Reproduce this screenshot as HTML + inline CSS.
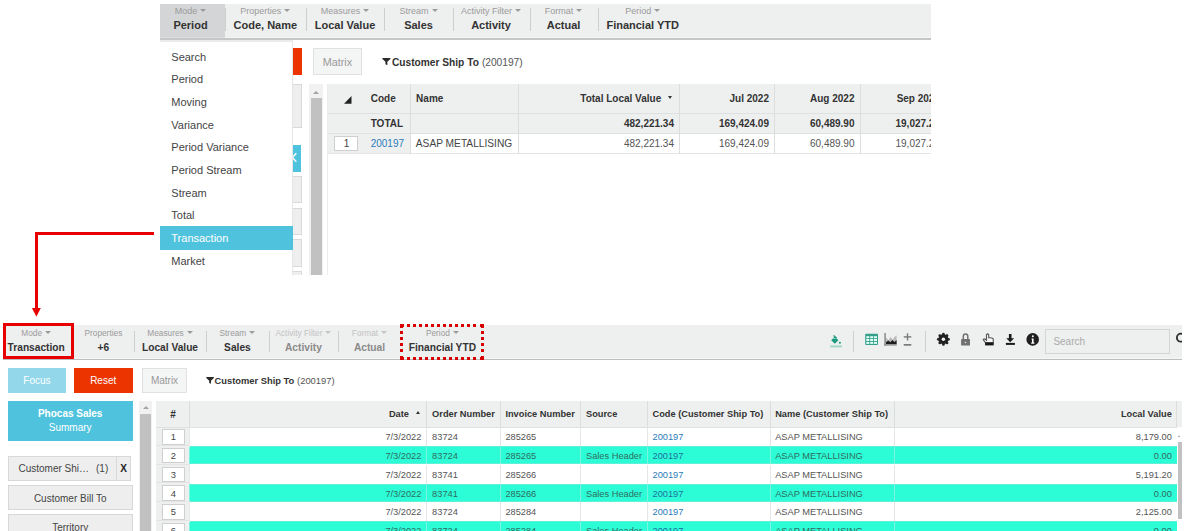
<!DOCTYPE html>
<html><head><meta charset="utf-8"><style>
html,body{margin:0;padding:0;background:#fff;width:1189px;height:531px;overflow:hidden;position:relative}
.a{position:absolute}
.t{white-space:nowrap;font-family:"Liberation Sans",sans-serif}
body{font-family:"Liberation Sans",sans-serif}
</style></head><body>
<div class="a" style="left:160.00px;top:4.00px;width:771.00px;height:33.00px;background:#eeefef;"></div>
<div class="a" style="left:160.00px;top:37.00px;width:771.00px;height:1.00px;background:#f2f3f3;"></div>
<div class="a" style="left:160.00px;top:38.00px;width:771.00px;height:1.60px;background:#c4c6c8;"></div>
<div class="a" style="left:160.00px;top:4.00px;width:65.00px;height:33.00px;background:#d3d5d7;"></div>
<div class="a" style="left:160.00px;top:37.00px;width:65.00px;height:1.00px;background:#dcdee0;"></div>
<div class="a" style="left:224.80px;top:7.70px;width:1.00px;height:22.90px;background:#cdcfcf;"></div>
<div class="a" style="left:306.30px;top:7.70px;width:1.00px;height:22.90px;background:#cdcfcf;"></div>
<div class="a" style="left:384.00px;top:7.70px;width:1.00px;height:22.90px;background:#cdcfcf;"></div>
<div class="a" style="left:452.60px;top:7.70px;width:1.00px;height:22.90px;background:#cdcfcf;"></div>
<div class="a" style="left:529.80px;top:7.70px;width:1.00px;height:22.90px;background:#cdcfcf;"></div>
<div class="a" style="left:598.00px;top:7.70px;width:1.00px;height:22.90px;background:#cdcfcf;"></div>
<div class="a t" style="left:-309.50px;width:1000px;text-align:center;top:5.00px;font-size:9px;line-height:13px;color:#9b9b9b;font-weight:400;">Mode<span style="display:inline-block;width:0;height:0;border-left:3px solid transparent;border-right:3px solid transparent;border-top:3px solid #9b9b9b;vertical-align:middle;margin-left:3px;position:relative;top:-1px"></span></div>
<div class="a t" style="left:-309.50px;width:1000px;text-align:center;top:18.00px;font-size:11px;line-height:15px;color:#333333;font-weight:700;">Period</div>
<div class="a t" style="left:-234.70px;width:1000px;text-align:center;top:5.00px;font-size:9px;line-height:13px;color:#9b9b9b;font-weight:400;">Properties<span style="display:inline-block;width:0;height:0;border-left:3px solid transparent;border-right:3px solid transparent;border-top:3px solid #9b9b9b;vertical-align:middle;margin-left:3px;position:relative;top:-1px"></span></div>
<div class="a t" style="left:-234.70px;width:1000px;text-align:center;top:18.00px;font-size:11px;line-height:15px;color:#333333;font-weight:700;">Code, Name</div>
<div class="a t" style="left:-155.00px;width:1000px;text-align:center;top:5.00px;font-size:9px;line-height:13px;color:#9b9b9b;font-weight:400;">Measures<span style="display:inline-block;width:0;height:0;border-left:3px solid transparent;border-right:3px solid transparent;border-top:3px solid #9b9b9b;vertical-align:middle;margin-left:3px;position:relative;top:-1px"></span></div>
<div class="a t" style="left:-155.00px;width:1000px;text-align:center;top:18.00px;font-size:11px;line-height:15px;color:#333333;font-weight:700;">Local Value</div>
<div class="a t" style="left:-81.50px;width:1000px;text-align:center;top:5.00px;font-size:9px;line-height:13px;color:#9b9b9b;font-weight:400;">Stream<span style="display:inline-block;width:0;height:0;border-left:3px solid transparent;border-right:3px solid transparent;border-top:3px solid #9b9b9b;vertical-align:middle;margin-left:3px;position:relative;top:-1px"></span></div>
<div class="a t" style="left:-81.50px;width:1000px;text-align:center;top:18.00px;font-size:11px;line-height:15px;color:#333333;font-weight:700;">Sales</div>
<div class="a t" style="left:-9.00px;width:1000px;text-align:center;top:5.00px;font-size:9px;line-height:13px;color:#9b9b9b;font-weight:400;">Activity Filter<span style="display:inline-block;width:0;height:0;border-left:3px solid transparent;border-right:3px solid transparent;border-top:3px solid #9b9b9b;vertical-align:middle;margin-left:3px;position:relative;top:-1px"></span></div>
<div class="a t" style="left:-9.00px;width:1000px;text-align:center;top:18.00px;font-size:11px;line-height:15px;color:#333333;font-weight:700;">Activity</div>
<div class="a t" style="left:63.50px;width:1000px;text-align:center;top:5.00px;font-size:9px;line-height:13px;color:#9b9b9b;font-weight:400;">Format<span style="display:inline-block;width:0;height:0;border-left:3px solid transparent;border-right:3px solid transparent;border-top:3px solid #9b9b9b;vertical-align:middle;margin-left:3px;position:relative;top:-1px"></span></div>
<div class="a t" style="left:63.50px;width:1000px;text-align:center;top:18.00px;font-size:11px;line-height:15px;color:#333333;font-weight:700;">Actual</div>
<div class="a t" style="left:142.70px;width:1000px;text-align:center;top:5.00px;font-size:9px;line-height:13px;color:#9b9b9b;font-weight:400;">Period<span style="display:inline-block;width:0;height:0;border-left:3px solid transparent;border-right:3px solid transparent;border-top:3px solid #9b9b9b;vertical-align:middle;margin-left:3px;position:relative;top:-1px"></span></div>
<div class="a t" style="left:142.70px;width:1000px;text-align:center;top:18.00px;font-size:11px;line-height:15px;color:#333333;font-weight:700;">Financial YTD</div>
<div class="a" style="left:292.50px;top:48.40px;width:9.50px;height:27.10px;background:#eb3400;"></div>
<div class="a" style="left:292.50px;top:84.00px;width:9.00px;height:43.50px;background:#eeeeee;border:1px solid #d9d9d9;border-left:none;box-sizing:border-box;"></div>
<div class="a" style="left:292.50px;top:144.50px;width:8.20px;height:27.10px;background:#4fc3de;"></div>
<svg class="a" style="left:285px;top:150px" width="16" height="16" viewBox="285 150 16 16"><path d="M288.5 153.3 L296.3 161.8 M296.3 153.3 L288.5 161.8" stroke="#ffffff" stroke-width="1.4"/></svg>
<div class="a" style="left:292.50px;top:175.80px;width:9.30px;height:27.10px;background:#eeeeee;border:1px solid #d9d9d9;border-left:none;box-sizing:border-box;"></div>
<div class="a" style="left:292.50px;top:207.70px;width:9.30px;height:27.10px;background:#eeeeee;border:1px solid #d9d9d9;border-left:none;box-sizing:border-box;"></div>
<div class="a" style="left:292.50px;top:239.00px;width:9.30px;height:27.60px;background:#eeeeee;border:1px solid #d9d9d9;border-left:none;box-sizing:border-box;"></div>
<div class="a" style="left:292.50px;top:271.00px;width:9.30px;height:9.00px;background:#eeeeee;border:1px solid #d9d9d9;border-left:none;box-sizing:border-box;"></div>
<div class="a" style="left:309.30px;top:84.20px;width:13.60px;height:191.80px;background:#f1f1f1;"></div>
<div class="a" style="left:310.50px;top:98.10px;width:11.10px;height:177.90px;background:#c1c1c1;"></div>
<div class="a" style="left:313.2px;top:90.5px;width:0;height:0;border-left:3px solid transparent;border-right:3px solid transparent;border-bottom:3px solid #a3a3a3"></div>
<div class="a" style="left:313.20px;top:48.40px;width:48.40px;height:27.10px;background:#f4f5f5;border:1px solid #e0e1e1;box-sizing:border-box;"></div>
<div class="a t" style="left:-162.60px;width:1000px;text-align:center;top:55.00px;font-size:10.8px;line-height:15px;color:#9a9a9a;font-weight:400;">Matrix</div>
<svg class="a" style="left:382.1px;top:58.1px" width="8.8" height="7.2" viewBox="0 0 10 9"><path d="M0 0 H10 V1.2 L6.2 4.8 V9 L3.8 7.8 V4.8 L0 1.2 Z" fill="#2a2a2a"/></svg>
<div class="a t" style="left:391.90px;top:56.00px;font-size:10.2px;line-height:14px;color:#333333;font-weight:700;">Customer Ship To</div>
<div class="a t" style="left:481.90px;top:56.00px;font-size:10.2px;line-height:14px;color:#555;font-weight:400;">(200197)</div>
<div class="a" style="left:327.50px;top:84.00px;width:603.50px;height:49.00px;background:#eef0f0;"></div>
<div class="a" style="left:327.50px;top:113.20px;width:603.50px;height:1.00px;background:#dfe0e0;"></div>
<div class="a" style="left:327.50px;top:132.90px;width:603.50px;height:1.00px;background:#dfe0e0;"></div>
<div class="a" style="left:327.50px;top:133.90px;width:83.00px;height:19.40px;background:#eef0f0;"></div>
<div class="a" style="left:410.50px;top:133.90px;width:520.50px;height:19.40px;background:#ffffff;"></div>
<div class="a" style="left:327.50px;top:153.00px;width:603.50px;height:1.00px;background:#e4e5e5;"></div>
<div class="a" style="left:326.80px;top:84.00px;width:1.00px;height:192.00px;background:#ececec;"></div>
<div class="a" style="left:410.00px;top:84.00px;width:1.00px;height:69.70px;background:#dcdddd;"></div>
<div class="a" style="left:518.00px;top:84.00px;width:1.00px;height:69.70px;background:#dcdddd;"></div>
<div class="a" style="left:679.00px;top:84.00px;width:1.00px;height:69.70px;background:#dcdddd;"></div>
<div class="a" style="left:774.10px;top:84.00px;width:1.00px;height:69.70px;background:#dcdddd;"></div>
<div class="a" style="left:860.30px;top:84.00px;width:1.00px;height:69.70px;background:#dcdddd;"></div>
<svg class="a" style="left:343.5px;top:95.8px" width="8" height="8" viewBox="0 0 8 8"><path d="M7.5 0 V7.7 H0 Z" fill="#222"/></svg>
<div class="a t" style="left:370.70px;top:92.00px;font-size:10px;line-height:14px;color:#333333;font-weight:700;">Code</div>
<div class="a t" style="left:416.10px;top:92.00px;font-size:10px;line-height:14px;color:#333333;font-weight:700;">Name</div>
<div class="a t" style="left:-328.00px;width:1000px;text-align:right;top:92.00px;font-size:10px;line-height:14px;color:#333333;font-weight:700;">Total Local Value <span style="display:inline-block;width:0;height:0;border-left:2.5px solid transparent;border-right:2.5px solid transparent;border-top:3px solid #333;vertical-align:middle;margin-left:4px;position:relative;top:-2px"></span></div>
<div class="a t" style="left:-231.00px;width:1000px;text-align:right;top:92.00px;font-size:10px;line-height:14px;color:#333333;font-weight:700;">Jul 2022</div>
<div class="a t" style="left:-145.50px;width:1000px;text-align:right;top:92.00px;font-size:10px;line-height:14px;color:#333333;font-weight:700;">Aug 2022</div>
<div class="a t" style="left:-60.00px;width:1000px;text-align:right;top:92.00px;font-size:10px;line-height:14px;color:#333333;font-weight:700;">Sep 2022</div>
<div class="a t" style="left:370.70px;top:117.00px;font-size:10px;line-height:14px;color:#333333;font-weight:700;">TOTAL</div>
<div class="a t" style="left:-326.00px;width:1000px;text-align:right;top:117.00px;font-size:10px;line-height:14px;color:#333333;font-weight:700;">482,221.34</div>
<div class="a t" style="left:-231.00px;width:1000px;text-align:right;top:117.00px;font-size:10px;line-height:14px;color:#333333;font-weight:700;">169,424.09</div>
<div class="a t" style="left:-145.50px;width:1000px;text-align:right;top:117.00px;font-size:10px;line-height:14px;color:#333333;font-weight:700;">60,489.90</div>
<div class="a t" style="left:-60.00px;width:1000px;text-align:right;top:117.00px;font-size:10px;line-height:14px;color:#333333;font-weight:700;">19,027.23</div>
<div class="a" style="left:334.30px;top:136.00px;width:24.10px;height:15.40px;background:#ffffff;border:1px solid #cfcfcf;box-sizing:border-box;"></div>
<div class="a t" style="left:-153.60px;width:1000px;text-align:center;top:137.00px;font-size:10px;line-height:14px;color:#444;font-weight:400;">1</div>
<div class="a t" style="left:370.70px;top:137.00px;font-size:10px;line-height:14px;color:#2b7bb9;font-weight:400;">200197</div>
<div class="a t" style="left:415.80px;top:137.00px;font-size:10.2px;line-height:14px;color:#444;font-weight:400;">ASAP METALLISING</div>
<div class="a t" style="left:-326.00px;width:1000px;text-align:right;top:137.00px;font-size:10px;line-height:14px;color:#555;font-weight:400;">482,221.34</div>
<div class="a t" style="left:-231.00px;width:1000px;text-align:right;top:137.00px;font-size:10px;line-height:14px;color:#555;font-weight:400;">169,424.09</div>
<div class="a t" style="left:-145.50px;width:1000px;text-align:right;top:137.00px;font-size:10px;line-height:14px;color:#555;font-weight:400;">60,489.90</div>
<div class="a t" style="left:-60.00px;width:1000px;text-align:right;top:137.00px;font-size:10px;line-height:14px;color:#555;font-weight:400;">19,027.23</div>
<div class="a" style="left:931.00px;top:0.00px;width:258.00px;height:300.00px;background:#ffffff;"></div>
<div class="a" style="left:160.00px;top:42.00px;width:132.50px;height:234.00px;background:#ffffff;border-right:1px solid #e6e6e6;box-sizing:border-box;"></div>
<div class="a" style="left:160.00px;top:274.80px;width:771.00px;height:47.20px;background:#ffffff;"></div>
<div class="a" style="left:160.00px;top:40.40px;width:132.50px;height:1.40px;background:#ebebeb;"></div>
<div class="a" style="left:160.00px;top:226.30px;width:132.50px;height:23.40px;background:#4fc3de;"></div>
<div class="a t" style="left:171.30px;top:50.00px;font-size:11px;line-height:15px;color:#444;font-weight:400;">Search</div>
<div class="a t" style="left:171.30px;top:72.00px;font-size:11px;line-height:15px;color:#444;font-weight:400;">Period</div>
<div class="a t" style="left:171.30px;top:95.00px;font-size:11px;line-height:15px;color:#444;font-weight:400;">Moving</div>
<div class="a t" style="left:171.30px;top:118.00px;font-size:11px;line-height:15px;color:#444;font-weight:400;">Variance</div>
<div class="a t" style="left:171.30px;top:140.00px;font-size:11px;line-height:15px;color:#444;font-weight:400;">Period Variance</div>
<div class="a t" style="left:171.30px;top:163.00px;font-size:11px;line-height:15px;color:#444;font-weight:400;">Period Stream</div>
<div class="a t" style="left:171.30px;top:186.00px;font-size:11px;line-height:15px;color:#444;font-weight:400;">Stream</div>
<div class="a t" style="left:171.30px;top:208.00px;font-size:11px;line-height:15px;color:#444;font-weight:400;">Total</div>
<div class="a t" style="left:171.30px;top:231.00px;font-size:11px;line-height:15px;color:#ffffff;font-weight:400;">Transaction</div>
<div class="a t" style="left:171.30px;top:254.00px;font-size:11px;line-height:15px;color:#444;font-weight:400;">Market</div>
<div class="a" style="left:34.90px;top:232.40px;width:118.70px;height:2.50px;background:#e80000;"></div>
<div class="a" style="left:34.90px;top:232.40px;width:2.90px;height:76.60px;background:#e80000;"></div>
<svg class="a" style="left:31px;top:307px" width="12" height="11" viewBox="0 0 12 11"><path d="M0.9 1 H9.8 L5.4 9.8 Z" fill="#e80000"/></svg>
<div class="a" style="left:3.00px;top:325.00px;width:1179.00px;height:33.00px;background:#eeefef;"></div>
<div class="a" style="left:3.00px;top:358.00px;width:1179.00px;height:1.00px;background:#f4f5f5;"></div>
<div class="a" style="left:3.00px;top:359.00px;width:1179.00px;height:1.10px;background:#bbbdbf;"></div>
<div class="a" style="left:134.00px;top:330.50px;width:1.00px;height:21.50px;background:#cdcfcf;"></div>
<div class="a" style="left:206.20px;top:330.50px;width:1.00px;height:21.50px;background:#cdcfcf;"></div>
<div class="a" style="left:268.50px;top:330.50px;width:1.00px;height:21.50px;background:#cdcfcf;"></div>
<div class="a" style="left:337.90px;top:330.50px;width:1.00px;height:21.50px;background:#cdcfcf;"></div>
<div class="a" style="left:853.30px;top:330.50px;width:1.00px;height:21.50px;background:#cdcfcf;"></div>
<div class="a" style="left:924.90px;top:330.50px;width:1.00px;height:21.50px;background:#cdcfcf;"></div>
<div class="a t" style="left:-463.80px;width:1000px;text-align:center;top:327.00px;font-size:8.3px;line-height:12px;color:#9b9b9b;font-weight:400;">Mode<span style="display:inline-block;width:0;height:0;border-left:3px solid transparent;border-right:3px solid transparent;border-top:3px solid #9b9b9b;vertical-align:middle;margin-left:3px;position:relative;top:-1px"></span></div>
<div class="a t" style="left:-463.80px;width:1000px;text-align:center;top:341.00px;font-size:10.2px;line-height:14px;color:#333333;font-weight:700;">Transaction</div>
<div class="a t" style="left:-396.60px;width:1000px;text-align:center;top:327.00px;font-size:8.3px;line-height:12px;color:#9b9b9b;font-weight:400;">Properties</div>
<div class="a t" style="left:-396.60px;width:1000px;text-align:center;top:341.00px;font-size:10.2px;line-height:14px;color:#333333;font-weight:700;">+6</div>
<div class="a t" style="left:-330.00px;width:1000px;text-align:center;top:327.00px;font-size:8.3px;line-height:12px;color:#9b9b9b;font-weight:400;">Measures<span style="display:inline-block;width:0;height:0;border-left:3px solid transparent;border-right:3px solid transparent;border-top:3px solid #9b9b9b;vertical-align:middle;margin-left:3px;position:relative;top:-1px"></span></div>
<div class="a t" style="left:-330.00px;width:1000px;text-align:center;top:341.00px;font-size:10.2px;line-height:14px;color:#333333;font-weight:700;">Local Value</div>
<div class="a t" style="left:-262.60px;width:1000px;text-align:center;top:327.00px;font-size:8.3px;line-height:12px;color:#9b9b9b;font-weight:400;">Stream<span style="display:inline-block;width:0;height:0;border-left:3px solid transparent;border-right:3px solid transparent;border-top:3px solid #9b9b9b;vertical-align:middle;margin-left:3px;position:relative;top:-1px"></span></div>
<div class="a t" style="left:-262.60px;width:1000px;text-align:center;top:341.00px;font-size:10.2px;line-height:14px;color:#333333;font-weight:700;">Sales</div>
<div class="a t" style="left:-196.60px;width:1000px;text-align:center;top:327.00px;font-size:8.3px;line-height:12px;color:#c4c4c4;font-weight:400;">Activity Filter<span style="display:inline-block;width:0;height:0;border-left:3px solid transparent;border-right:3px solid transparent;border-top:3px solid #c4c4c4;vertical-align:middle;margin-left:3px;position:relative;top:-1px"></span></div>
<div class="a t" style="left:-196.60px;width:1000px;text-align:center;top:341.00px;font-size:10.2px;line-height:14px;color:#8a8a8a;font-weight:700;">Activity</div>
<div class="a t" style="left:-130.50px;width:1000px;text-align:center;top:327.00px;font-size:8.3px;line-height:12px;color:#c4c4c4;font-weight:400;">Format<span style="display:inline-block;width:0;height:0;border-left:3px solid transparent;border-right:3px solid transparent;border-top:3px solid #c4c4c4;vertical-align:middle;margin-left:3px;position:relative;top:-1px"></span></div>
<div class="a t" style="left:-130.50px;width:1000px;text-align:center;top:341.00px;font-size:10.2px;line-height:14px;color:#8a8a8a;font-weight:700;">Actual</div>
<div class="a t" style="left:-57.60px;width:1000px;text-align:center;top:327.00px;font-size:8.3px;line-height:12px;color:#9b9b9b;font-weight:400;">Period<span style="display:inline-block;width:0;height:0;border-left:3px solid transparent;border-right:3px solid transparent;border-top:3px solid #9b9b9b;vertical-align:middle;margin-left:3px;position:relative;top:-1px"></span></div>
<div class="a t" style="left:-57.60px;width:1000px;text-align:center;top:341.00px;font-size:10.2px;line-height:14px;color:#333333;font-weight:700;">Financial YTD</div>
<div class="a" style="left:3.00px;top:322.80px;width:70.90px;height:35.90px;border:3px solid #e80000;box-sizing:border-box;"></div>
<div class="a" style="left:400.00px;top:324.30px;width:84.00px;height:35.30px;border:3px dotted #d80000;box-sizing:border-box;"></div>
<svg class="a" style="left:826px;top:330px" width="20" height="20" viewBox="826 330 20 20"><path d="M834.8 336.6 L838.4 340.2 L834.8 343.8 L831.2 340.2 Z" fill="#1d9a7f"/><path d="M832.4 339.1 Q834.8 337.6 837.2 339.1 Z" fill="#bff3e6"/><path d="M833.6 335.4 L836.6 338.2" stroke="#1d9a7f" stroke-width="1.3"/><circle cx="839.9" cy="342.7" r="1.05" fill="#1d9a7f"/><rect x="830.1" y="345.4" width="11.9" height="2" fill="#a5d7c8"/></svg>
<svg class="a" style="left:862px;top:330px" width="52" height="20" viewBox="862 330 52 20"><rect x="865.2" y="333.8" width="12.8" height="11.1" rx="0.8" fill="#35a08a"/><rect x="866.3" y="336.2" width="3.0" height="2.0" fill="#e2fff8"/><rect x="870.2" y="336.2" width="3.0" height="2.0" fill="#e2fff8"/><rect x="874.0" y="336.2" width="3.0" height="2.0" fill="#e2fff8"/><rect x="866.3" y="339.0" width="3.0" height="2.0" fill="#e2fff8"/><rect x="870.2" y="339.0" width="3.0" height="2.0" fill="#e2fff8"/><rect x="874.0" y="339.0" width="3.0" height="2.0" fill="#e2fff8"/><rect x="866.3" y="341.9" width="3.0" height="2.0" fill="#e2fff8"/><rect x="870.2" y="341.9" width="3.0" height="2.0" fill="#e2fff8"/><rect x="874.0" y="341.9" width="3.0" height="2.0" fill="#e2fff8"/><path d="M886 344.3 V337.6 L888.5 340.3 L890.6 337.1 L892.6 339.8 L894.6 336.9 L896.6 335.2 V344.3 Z" fill="#b9b9b9"/><path d="M886 344.3 V342.2 L888.3 340.6 L890.3 342.2 L892.3 340.0 L894.5 342.0 L896.6 340.0 V344.3 Z" fill="#1e1e1e"/><rect x="884.2" y="333" width="1.8" height="12.6" fill="#9a9a9a"/><rect x="884.2" y="344.3" width="12.6" height="1.3" fill="#8a8a8a"/><rect x="906.8" y="333.3" width="1.4" height="7.2" fill="#7a7a7a"/><rect x="903.8" y="336.2" width="7.5" height="1.4" fill="#7a7a7a"/><rect x="903.7" y="344" width="7.6" height="1.7" fill="#7a7a7a"/></svg>
<svg class="a" style="left:930px;top:328px" width="115" height="26" viewBox="930 328 115 26"><circle cx="943.4" cy="339.3" r="5.0" fill="#222"/><circle cx="948.50" cy="339.30" r="1.35" fill="#222"/><circle cx="947.01" cy="342.91" r="1.35" fill="#222"/><circle cx="943.40" cy="344.40" r="1.35" fill="#222"/><circle cx="939.79" cy="342.91" r="1.35" fill="#222"/><circle cx="938.30" cy="339.30" r="1.35" fill="#222"/><circle cx="939.79" cy="335.69" r="1.35" fill="#222"/><circle cx="943.40" cy="334.20" r="1.35" fill="#222"/><circle cx="947.01" cy="335.69" r="1.35" fill="#222"/><circle cx="943.4" cy="339.3" r="1.7" fill="#f2f3f3"/><path d="M963.3 339.4 V336.3 A2.25 2.4 0 0 1 967.8 336.3 V339.4" fill="none" stroke="#717171" stroke-width="1.5"/><rect x="961.1" y="339" width="8.9" height="6.6" rx="0.6" fill="#717171"/><circle cx="965.5" cy="342.5" r="0.8" fill="#e8e8e8"/><path d="M986.5 340.2 V334.6 Q987.6 333.0 988.7 334.6 V337.8 Q991.5 337.4 993.2 338.8 L993.3 342.6 H985.4 L983.2 339.6 Q984.3 338.4 985.6 339.5 Z" fill="#f8f8f8" stroke="#5a5a5a" stroke-width="1.15"/><rect x="985.1" y="342.6" width="8.6" height="2.8" fill="#161616"/><rect x="1008.9" y="334" width="2.6" height="5" fill="#1a1a1a"/><path d="M1006.3 338.2 H1014.1 L1010.2 342.2 Z" fill="#1a1a1a"/><rect x="1005.9" y="342.9" width="9" height="2" fill="#1a1a1a"/><circle cx="1032.7" cy="339.4" r="6.3" fill="#1f1f1f"/><circle cx="1032.8" cy="336.3" r="1.0" fill="#ffffff"/><path d="M1031.6 338.6 H1033.6 V342.6 H1034.4 V343.7 H1031.2 V342.6 H1032.0 V339.7 H1031.6 Z" fill="#ffffff"/></svg>
<div class="a" style="left:1044.70px;top:329.00px;width:125.00px;height:24.80px;background:#eeefef;border:1px solid #d3d4d4;box-sizing:border-box;"></div>
<div class="a t" style="left:1053.40px;top:335.00px;font-size:10px;line-height:14px;color:#aaaaaa;font-weight:400;">Search</div>
<svg class="a" style="left:1174px;top:332px" width="12" height="14" viewBox="0 0 12 14"><circle cx="6.9" cy="5.7" r="4.0" fill="none" stroke="#2a2a2a" stroke-width="1.8"/></svg>
<div class="a" style="left:1182.00px;top:315.00px;width:7.00px;height:50.00px;background:#ffffff;"></div>
<div class="a" style="left:8.00px;top:368.10px;width:57.80px;height:24.60px;background:#92d7ea;"></div>
<div class="a t" style="left:-463.10px;width:1000px;text-align:center;top:374.00px;font-size:10px;line-height:14px;color:#ffffff;font-weight:400;">Focus</div>
<div class="a" style="left:74.00px;top:368.10px;width:58.50px;height:24.60px;background:#eb3400;"></div>
<div class="a t" style="left:-396.80px;width:1000px;text-align:center;top:374.00px;font-size:10px;line-height:14px;color:#ffffff;font-weight:400;">Reset</div>
<div class="a" style="left:142.40px;top:368.20px;width:44.30px;height:24.40px;background:#f4f5f5;border:1px solid #e0e1e1;box-sizing:border-box;"></div>
<div class="a t" style="left:-335.50px;width:1000px;text-align:center;top:374.00px;font-size:10px;line-height:14px;color:#9a9a9a;font-weight:400;">Matrix</div>
<svg class="a" style="left:205.6px;top:377px" width="8.2" height="6.8" viewBox="0 0 10 9"><path d="M0 0 H10 V1.2 L6.2 4.8 V9 L3.8 7.8 V4.8 L0 1.2 Z" fill="#2a2a2a"/></svg>
<div class="a t" style="left:214.50px;top:375.00px;font-size:9.35px;line-height:13px;color:#333333;font-weight:700;">Customer Ship To</div>
<div class="a t" style="left:297.10px;top:375.00px;font-size:9.35px;line-height:13px;color:#555;font-weight:400;">(200197)</div>
<div class="a" style="left:8.00px;top:400.70px;width:124.50px;height:40.20px;background:#4fc3de;"></div>
<div class="a t" style="left:-429.80px;width:1000px;text-align:center;top:407.00px;font-size:10px;line-height:14px;color:#ffffff;font-weight:700;">Phocas Sales</div>
<div class="a t" style="left:-429.80px;width:1000px;text-align:center;top:421.00px;font-size:10px;line-height:14px;color:#ffffff;font-weight:400;">Summary</div>
<div class="a" style="left:7.70px;top:456.30px;width:123.40px;height:24.80px;background:#eeeeee;border:1px solid #d8d8d8;box-sizing:border-box;"></div>
<div class="a" style="left:116.00px;top:456.30px;width:1.00px;height:24.80px;background:#d8d8d8;"></div>
<div class="a t" style="left:18.50px;top:462.00px;font-size:10px;line-height:14px;color:#444;font-weight:400;">Customer Shi&hellip;</div>
<div class="a t" style="left:96.00px;top:462.00px;font-size:10px;line-height:14px;color:#444;font-weight:400;">(1)</div>
<div class="a t" style="left:-376.50px;width:1000px;text-align:center;top:462.00px;font-size:10px;line-height:14px;color:#222;font-weight:700;">X</div>
<div class="a" style="left:7.70px;top:485.40px;width:125.10px;height:24.60px;background:#eeeeee;border:1px solid #d8d8d8;box-sizing:border-box;"></div>
<div class="a t" style="left:-429.80px;width:1000px;text-align:center;top:492.00px;font-size:10px;line-height:14px;color:#444;font-weight:400;">Customer Bill To</div>
<div class="a" style="left:7.70px;top:514.10px;width:125.10px;height:30.90px;background:#eeeeee;border:1px solid #d8d8d8;box-sizing:border-box;"></div>
<div class="a t" style="left:-429.80px;width:1000px;text-align:center;top:521.00px;font-size:10px;line-height:14px;color:#444;font-weight:400;">Territory</div>
<div class="a" style="left:139.00px;top:401.00px;width:12.60px;height:130.00px;background:#f1f1f1;"></div>
<div class="a" style="left:140.30px;top:413.90px;width:10.50px;height:117.10px;background:#c1c1c1;"></div>
<div class="a" style="left:142.6px;top:406px;width:0;height:0;border-left:3px solid transparent;border-right:3px solid transparent;border-bottom:3px solid #a3a3a3"></div>
<div class="a" style="left:156.40px;top:401.30px;width:1025.60px;height:26.00px;background:#eef0f0;"></div>
<div class="a" style="left:156.40px;top:426.80px;width:1025.60px;height:1.00px;background:#dfe0e0;"></div>
<div class="a" style="left:156.40px;top:427.30px;width:33.30px;height:103.70px;background:#eef0f0;"></div>
<div class="a" style="left:156.40px;top:426.80px;width:1025.60px;height:1.00px;background:#dfe0e0;"></div>
<div class="a" style="left:156.40px;top:444.85px;width:33.30px;height:1.00px;background:#e3e4e4;"></div>
<div class="a" style="left:190.20px;top:446.55px;width:986.40px;height:17.40px;background:#2dfdd6;"></div>
<div class="a" style="left:190.20px;top:446.35px;width:986.40px;height:0.80px;background:#5ff0d8;"></div>
<div class="a" style="left:190.20px;top:463.35px;width:986.40px;height:0.80px;background:#5ff0d8;"></div>
<div class="a" style="left:156.40px;top:463.60px;width:33.30px;height:1.00px;background:#e3e4e4;"></div>
<div class="a" style="left:156.40px;top:482.35px;width:33.30px;height:1.00px;background:#e3e4e4;"></div>
<div class="a" style="left:190.20px;top:484.05px;width:986.40px;height:17.40px;background:#2dfdd6;"></div>
<div class="a" style="left:190.20px;top:483.85px;width:986.40px;height:0.80px;background:#5ff0d8;"></div>
<div class="a" style="left:190.20px;top:500.85px;width:986.40px;height:0.80px;background:#5ff0d8;"></div>
<div class="a" style="left:156.40px;top:501.10px;width:33.30px;height:1.00px;background:#e3e4e4;"></div>
<div class="a" style="left:156.40px;top:519.85px;width:33.30px;height:1.00px;background:#e3e4e4;"></div>
<div class="a" style="left:190.20px;top:521.55px;width:986.40px;height:17.40px;background:#2dfdd6;"></div>
<div class="a" style="left:190.20px;top:521.35px;width:986.40px;height:0.80px;background:#5ff0d8;"></div>
<div class="a" style="left:190.20px;top:538.35px;width:986.40px;height:0.80px;background:#5ff0d8;"></div>
<div class="a" style="left:156.40px;top:538.60px;width:33.30px;height:1.00px;background:#e3e4e4;"></div>
<div class="a" style="left:189.20px;top:401.30px;width:1.00px;height:26.00px;background:#dcdddd;"></div>
<div class="a" style="left:426.20px;top:401.30px;width:1.00px;height:26.00px;background:#dcdddd;"></div>
<div class="a" style="left:499.70px;top:401.30px;width:1.00px;height:26.00px;background:#dcdddd;"></div>
<div class="a" style="left:580.00px;top:401.30px;width:1.00px;height:26.00px;background:#dcdddd;"></div>
<div class="a" style="left:646.50px;top:401.30px;width:1.00px;height:26.00px;background:#dcdddd;"></div>
<div class="a" style="left:770.10px;top:401.30px;width:1.00px;height:26.00px;background:#dcdddd;"></div>
<div class="a" style="left:893.70px;top:401.30px;width:1.00px;height:26.00px;background:#dcdddd;"></div>
<div class="a" style="left:1176.10px;top:401.30px;width:1.00px;height:26.00px;background:#dcdddd;"></div>
<div class="a" style="left:189.20px;top:427.30px;width:1.00px;height:18.75px;background:#e6e6e6;"></div>
<div class="a" style="left:189.20px;top:446.55px;width:1.00px;height:17.40px;background:#7cf3df;"></div>
<div class="a" style="left:189.20px;top:464.80px;width:1.00px;height:18.75px;background:#e6e6e6;"></div>
<div class="a" style="left:189.20px;top:484.05px;width:1.00px;height:17.40px;background:#7cf3df;"></div>
<div class="a" style="left:189.20px;top:502.30px;width:1.00px;height:18.75px;background:#e6e6e6;"></div>
<div class="a" style="left:189.20px;top:521.55px;width:1.00px;height:17.40px;background:#7cf3df;"></div>
<div class="a" style="left:426.20px;top:427.30px;width:1.00px;height:18.75px;background:#e6e6e6;"></div>
<div class="a" style="left:426.20px;top:446.55px;width:1.00px;height:17.40px;background:#7cf3df;"></div>
<div class="a" style="left:426.20px;top:464.80px;width:1.00px;height:18.75px;background:#e6e6e6;"></div>
<div class="a" style="left:426.20px;top:484.05px;width:1.00px;height:17.40px;background:#7cf3df;"></div>
<div class="a" style="left:426.20px;top:502.30px;width:1.00px;height:18.75px;background:#e6e6e6;"></div>
<div class="a" style="left:426.20px;top:521.55px;width:1.00px;height:17.40px;background:#7cf3df;"></div>
<div class="a" style="left:499.70px;top:427.30px;width:1.00px;height:18.75px;background:#e6e6e6;"></div>
<div class="a" style="left:499.70px;top:446.55px;width:1.00px;height:17.40px;background:#7cf3df;"></div>
<div class="a" style="left:499.70px;top:464.80px;width:1.00px;height:18.75px;background:#e6e6e6;"></div>
<div class="a" style="left:499.70px;top:484.05px;width:1.00px;height:17.40px;background:#7cf3df;"></div>
<div class="a" style="left:499.70px;top:502.30px;width:1.00px;height:18.75px;background:#e6e6e6;"></div>
<div class="a" style="left:499.70px;top:521.55px;width:1.00px;height:17.40px;background:#7cf3df;"></div>
<div class="a" style="left:580.00px;top:427.30px;width:1.00px;height:18.75px;background:#e6e6e6;"></div>
<div class="a" style="left:580.00px;top:446.55px;width:1.00px;height:17.40px;background:#7cf3df;"></div>
<div class="a" style="left:580.00px;top:464.80px;width:1.00px;height:18.75px;background:#e6e6e6;"></div>
<div class="a" style="left:580.00px;top:484.05px;width:1.00px;height:17.40px;background:#7cf3df;"></div>
<div class="a" style="left:580.00px;top:502.30px;width:1.00px;height:18.75px;background:#e6e6e6;"></div>
<div class="a" style="left:580.00px;top:521.55px;width:1.00px;height:17.40px;background:#7cf3df;"></div>
<div class="a" style="left:646.50px;top:427.30px;width:1.00px;height:18.75px;background:#e6e6e6;"></div>
<div class="a" style="left:646.50px;top:446.55px;width:1.00px;height:17.40px;background:#7cf3df;"></div>
<div class="a" style="left:646.50px;top:464.80px;width:1.00px;height:18.75px;background:#e6e6e6;"></div>
<div class="a" style="left:646.50px;top:484.05px;width:1.00px;height:17.40px;background:#7cf3df;"></div>
<div class="a" style="left:646.50px;top:502.30px;width:1.00px;height:18.75px;background:#e6e6e6;"></div>
<div class="a" style="left:646.50px;top:521.55px;width:1.00px;height:17.40px;background:#7cf3df;"></div>
<div class="a" style="left:770.10px;top:427.30px;width:1.00px;height:18.75px;background:#e6e6e6;"></div>
<div class="a" style="left:770.10px;top:446.55px;width:1.00px;height:17.40px;background:#7cf3df;"></div>
<div class="a" style="left:770.10px;top:464.80px;width:1.00px;height:18.75px;background:#e6e6e6;"></div>
<div class="a" style="left:770.10px;top:484.05px;width:1.00px;height:17.40px;background:#7cf3df;"></div>
<div class="a" style="left:770.10px;top:502.30px;width:1.00px;height:18.75px;background:#e6e6e6;"></div>
<div class="a" style="left:770.10px;top:521.55px;width:1.00px;height:17.40px;background:#7cf3df;"></div>
<div class="a" style="left:893.70px;top:427.30px;width:1.00px;height:18.75px;background:#e6e6e6;"></div>
<div class="a" style="left:893.70px;top:446.55px;width:1.00px;height:17.40px;background:#7cf3df;"></div>
<div class="a" style="left:893.70px;top:464.80px;width:1.00px;height:18.75px;background:#e6e6e6;"></div>
<div class="a" style="left:893.70px;top:484.05px;width:1.00px;height:17.40px;background:#7cf3df;"></div>
<div class="a" style="left:893.70px;top:502.30px;width:1.00px;height:18.75px;background:#e6e6e6;"></div>
<div class="a" style="left:893.70px;top:521.55px;width:1.00px;height:17.40px;background:#7cf3df;"></div>
<div class="a t" style="left:-327.00px;width:1000px;text-align:center;top:408.00px;font-size:10px;line-height:14px;color:#333333;font-weight:700;">#</div>
<div class="a t" style="left:-580.50px;width:1000px;text-align:right;top:408.00px;font-size:9.25px;line-height:13px;color:#333333;font-weight:700;">Date <span style="display:inline-block;width:0;height:0;border-left:2.5px solid transparent;border-right:2.5px solid transparent;border-bottom:3px solid #333;vertical-align:middle;margin-left:4px;position:relative;top:-2px"></span></div>
<div class="a t" style="left:432.10px;top:408.00px;font-size:9.25px;line-height:13px;color:#333333;font-weight:700;">Order Number</div>
<div class="a t" style="left:505.40px;top:408.00px;font-size:9.25px;line-height:13px;color:#333333;font-weight:700;">Invoice Number</div>
<div class="a t" style="left:586.00px;top:408.00px;font-size:9.25px;line-height:13px;color:#333333;font-weight:700;">Source</div>
<div class="a t" style="left:652.50px;top:408.00px;font-size:9.25px;line-height:13px;color:#333333;font-weight:700;">Code (Customer Ship To)</div>
<div class="a t" style="left:775.20px;top:408.00px;font-size:9.25px;line-height:13px;color:#333333;font-weight:700;">Name (Customer Ship To)</div>
<div class="a t" style="left:171.80px;width:1000px;text-align:right;top:408.00px;font-size:9.25px;line-height:13px;color:#333333;font-weight:700;">Local Value</div>
<div class="a" style="left:162.00px;top:429.00px;width:22.70px;height:15.50px;background:#ffffff;border:1px solid #cfcfcf;box-sizing:border-box;"></div>
<div class="a t" style="left:-326.70px;width:1000px;text-align:center;top:430.00px;font-size:9.4px;line-height:13px;color:#444;font-weight:400;">1</div>
<div class="a t" style="left:-578.60px;width:1000px;text-align:right;top:431.00px;font-size:9.25px;line-height:13px;color:#555;font-weight:400;">7/3/2022</div>
<div class="a t" style="left:432.10px;top:431.00px;font-size:9.25px;line-height:13px;color:#555;font-weight:400;">83724</div>
<div class="a t" style="left:505.40px;top:431.00px;font-size:9.25px;line-height:13px;color:#555;font-weight:400;">285265</div>
<div class="a t" style="left:652.50px;top:431.00px;font-size:9.25px;line-height:13px;color:#2b7bb9;font-weight:400;">200197</div>
<div class="a t" style="left:775.20px;top:431.00px;font-size:9.25px;line-height:13px;color:#555;font-weight:400;">ASAP METALLISING</div>
<div class="a t" style="left:171.80px;width:1000px;text-align:right;top:431.00px;font-size:9.25px;line-height:13px;color:#555;font-weight:400;">8,179.00</div>
<div class="a" style="left:162.00px;top:447.75px;width:22.70px;height:15.50px;background:#ffffff;border:1px solid #cfcfcf;box-sizing:border-box;"></div>
<div class="a t" style="left:-326.70px;width:1000px;text-align:center;top:449.00px;font-size:9.4px;line-height:13px;color:#444;font-weight:400;">2</div>
<div class="a t" style="left:-578.60px;width:1000px;text-align:right;top:450.00px;font-size:9.25px;line-height:13px;color:#2f6b62;font-weight:400;">7/3/2022</div>
<div class="a t" style="left:432.10px;top:450.00px;font-size:9.25px;line-height:13px;color:#2f6b62;font-weight:400;">83724</div>
<div class="a t" style="left:505.40px;top:450.00px;font-size:9.25px;line-height:13px;color:#2f6b62;font-weight:400;">285265</div>
<div class="a t" style="left:586.00px;top:450.00px;font-size:9.25px;line-height:13px;color:#2f6b62;font-weight:400;">Sales Header</div>
<div class="a t" style="left:652.50px;top:450.00px;font-size:9.25px;line-height:13px;color:#1f6fa0;font-weight:400;">200197</div>
<div class="a t" style="left:775.20px;top:450.00px;font-size:9.25px;line-height:13px;color:#2f6b62;font-weight:400;">ASAP METALLISING</div>
<div class="a t" style="left:171.80px;width:1000px;text-align:right;top:450.00px;font-size:9.25px;line-height:13px;color:#2f6b62;font-weight:400;">0.00</div>
<div class="a" style="left:162.00px;top:466.50px;width:22.70px;height:15.50px;background:#ffffff;border:1px solid #cfcfcf;box-sizing:border-box;"></div>
<div class="a t" style="left:-326.70px;width:1000px;text-align:center;top:468.00px;font-size:9.4px;line-height:13px;color:#444;font-weight:400;">3</div>
<div class="a t" style="left:-578.60px;width:1000px;text-align:right;top:469.00px;font-size:9.25px;line-height:13px;color:#555;font-weight:400;">7/3/2022</div>
<div class="a t" style="left:432.10px;top:469.00px;font-size:9.25px;line-height:13px;color:#555;font-weight:400;">83741</div>
<div class="a t" style="left:505.40px;top:469.00px;font-size:9.25px;line-height:13px;color:#555;font-weight:400;">285266</div>
<div class="a t" style="left:652.50px;top:469.00px;font-size:9.25px;line-height:13px;color:#2b7bb9;font-weight:400;">200197</div>
<div class="a t" style="left:775.20px;top:469.00px;font-size:9.25px;line-height:13px;color:#555;font-weight:400;">ASAP METALLISING</div>
<div class="a t" style="left:171.80px;width:1000px;text-align:right;top:469.00px;font-size:9.25px;line-height:13px;color:#555;font-weight:400;">5,191.20</div>
<div class="a" style="left:162.00px;top:485.25px;width:22.70px;height:15.50px;background:#ffffff;border:1px solid #cfcfcf;box-sizing:border-box;"></div>
<div class="a t" style="left:-326.70px;width:1000px;text-align:center;top:487.00px;font-size:9.4px;line-height:13px;color:#444;font-weight:400;">4</div>
<div class="a t" style="left:-578.60px;width:1000px;text-align:right;top:488.00px;font-size:9.25px;line-height:13px;color:#2f6b62;font-weight:400;">7/3/2022</div>
<div class="a t" style="left:432.10px;top:488.00px;font-size:9.25px;line-height:13px;color:#2f6b62;font-weight:400;">83741</div>
<div class="a t" style="left:505.40px;top:488.00px;font-size:9.25px;line-height:13px;color:#2f6b62;font-weight:400;">285266</div>
<div class="a t" style="left:586.00px;top:488.00px;font-size:9.25px;line-height:13px;color:#2f6b62;font-weight:400;">Sales Header</div>
<div class="a t" style="left:652.50px;top:488.00px;font-size:9.25px;line-height:13px;color:#1f6fa0;font-weight:400;">200197</div>
<div class="a t" style="left:775.20px;top:488.00px;font-size:9.25px;line-height:13px;color:#2f6b62;font-weight:400;">ASAP METALLISING</div>
<div class="a t" style="left:171.80px;width:1000px;text-align:right;top:488.00px;font-size:9.25px;line-height:13px;color:#2f6b62;font-weight:400;">0.00</div>
<div class="a" style="left:162.00px;top:504.00px;width:22.70px;height:15.50px;background:#ffffff;border:1px solid #cfcfcf;box-sizing:border-box;"></div>
<div class="a t" style="left:-326.70px;width:1000px;text-align:center;top:505.00px;font-size:9.4px;line-height:13px;color:#444;font-weight:400;">5</div>
<div class="a t" style="left:-578.60px;width:1000px;text-align:right;top:506.00px;font-size:9.25px;line-height:13px;color:#555;font-weight:400;">7/3/2022</div>
<div class="a t" style="left:432.10px;top:506.00px;font-size:9.25px;line-height:13px;color:#555;font-weight:400;">83724</div>
<div class="a t" style="left:505.40px;top:506.00px;font-size:9.25px;line-height:13px;color:#555;font-weight:400;">285284</div>
<div class="a t" style="left:652.50px;top:506.00px;font-size:9.25px;line-height:13px;color:#2b7bb9;font-weight:400;">200197</div>
<div class="a t" style="left:775.20px;top:506.00px;font-size:9.25px;line-height:13px;color:#555;font-weight:400;">ASAP METALLISING</div>
<div class="a t" style="left:171.80px;width:1000px;text-align:right;top:506.00px;font-size:9.25px;line-height:13px;color:#555;font-weight:400;">2,125.00</div>
<div class="a" style="left:162.00px;top:522.75px;width:22.70px;height:15.50px;background:#ffffff;border:1px solid #cfcfcf;box-sizing:border-box;"></div>
<div class="a t" style="left:-326.70px;width:1000px;text-align:center;top:524.00px;font-size:9.4px;line-height:13px;color:#444;font-weight:400;">6</div>
<div class="a t" style="left:-578.60px;width:1000px;text-align:right;top:525.00px;font-size:9.25px;line-height:13px;color:#2f6b62;font-weight:400;">7/3/2022</div>
<div class="a t" style="left:432.10px;top:525.00px;font-size:9.25px;line-height:13px;color:#2f6b62;font-weight:400;">83724</div>
<div class="a t" style="left:505.40px;top:525.00px;font-size:9.25px;line-height:13px;color:#2f6b62;font-weight:400;">285284</div>
<div class="a t" style="left:586.00px;top:525.00px;font-size:9.25px;line-height:13px;color:#2f6b62;font-weight:400;">Sales Header</div>
<div class="a t" style="left:652.50px;top:525.00px;font-size:9.25px;line-height:13px;color:#1f6fa0;font-weight:400;">200197</div>
<div class="a t" style="left:775.20px;top:525.00px;font-size:9.25px;line-height:13px;color:#2f6b62;font-weight:400;">ASAP METALLISING</div>
<div class="a t" style="left:171.80px;width:1000px;text-align:right;top:525.00px;font-size:9.25px;line-height:13px;color:#2f6b62;font-weight:400;">0.00</div>
<div class="a" style="left:1176.60px;top:427.30px;width:5.40px;height:103.70px;background:#ffffff;"></div>
<div class="a" style="left:1178.2px;top:434.8px;width:0;height:0;border-left:1.5px solid transparent;border-right:1.5px solid transparent;border-bottom:2px solid #9a9a9a"></div>
<div class="a" style="left:1178.10px;top:441.70px;width:3.50px;height:76.90px;background:#c1c1c1;"></div>
</body></html>
